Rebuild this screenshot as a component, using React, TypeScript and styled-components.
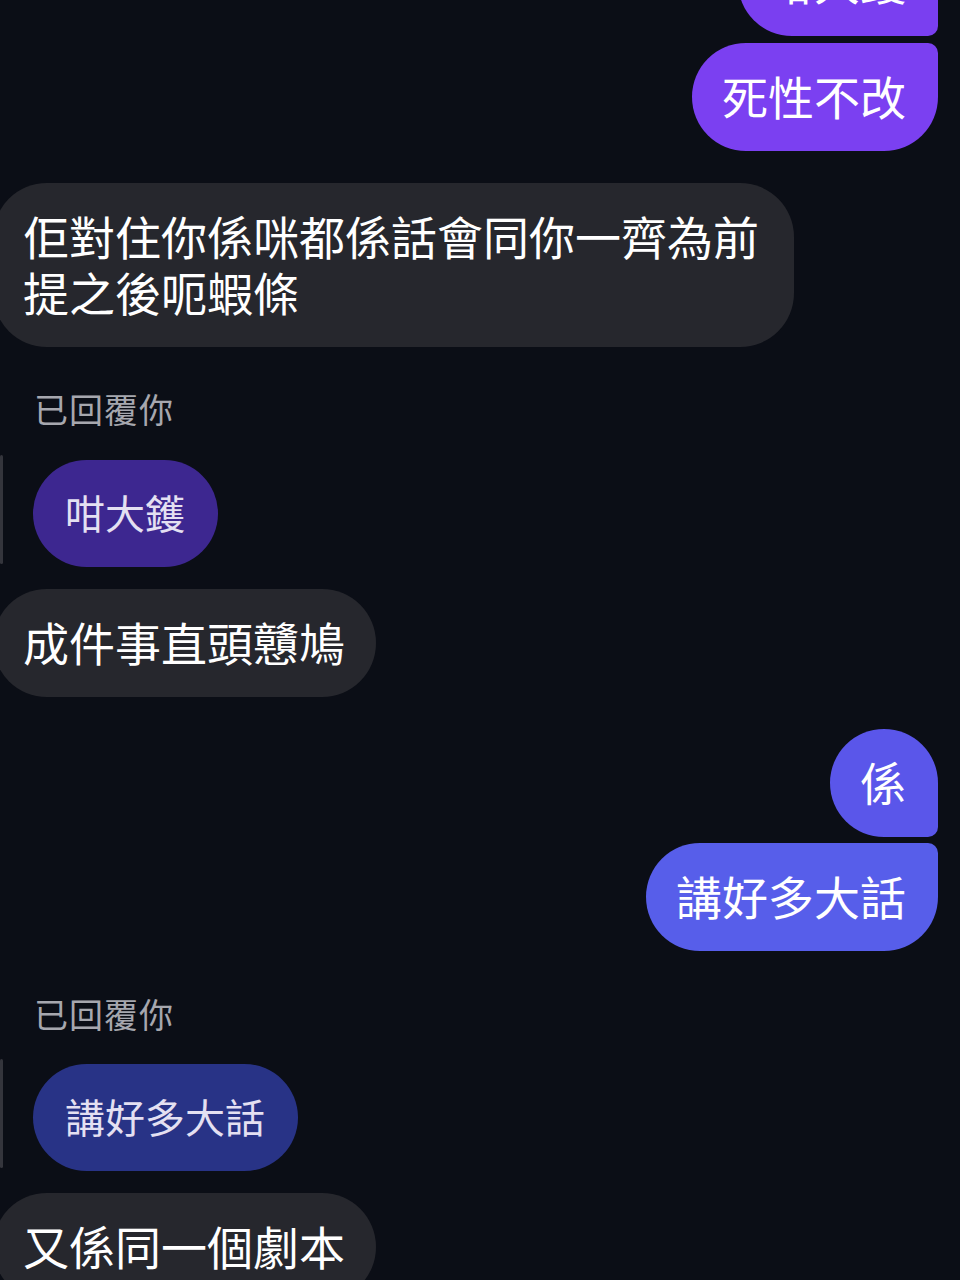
import React from "react";
import styled, { createGlobalStyle, css } from "styled-components";

const Global = createGlobalStyle`
  html, body {
    margin: 0;
    padding: 0;
    background: #0b0e16;
  }
  body {
    font-family: "Noto Sans CJK TC", "Noto Sans", sans-serif;
    overflow: hidden;
  }
`;

const Screen = styled.div`
  width: 960px;
  height: 1280px;
  overflow: hidden;
  background: #0b0e16;
`;

const Chat = styled.div`
  display: flex;
  flex-direction: column;
  padding: 0 22px 0 0;
`;

type Pos = "first" | "last" | "single";

const Row = styled.div<{ $side: "left" | "right"; $gap: number }>`
  display: flex;
  justify-content: ${(p) => (p.$side === "right" ? "flex-end" : "flex-start")};
  margin-top: ${(p) => p.$gap}px;
`;

const OutBubble = styled.div<{ $pos: Pos; $color: string }>`
  background: ${(p) => p.$color};
  color: #ffffff;
  font-size: 46px;
  line-height: 56px;
  padding: 24px 32px 28px 30px;
  white-space: nowrap;
  border-radius: 54px;
  ${(p) =>
    p.$pos === "first" &&
    css`
      border-bottom-right-radius: 10px;
    `}
  ${(p) =>
    p.$pos === "last" &&
    css`
      border-top-right-radius: 10px;
    `}
`;

const InBubble = styled.div`
  background: #26272d;
  color: #ffffff;
  font-size: 46px;
  line-height: 56px;
  padding: 24px 31px 28px 30px;
  margin-left: -7px;
  max-width: 740px;
  border-radius: 54px;
`;

const ReplyLabel = styled.div<{ $gap: number }>`
  margin-top: ${(p) => p.$gap}px;
  padding-left: 34px;
  color: #a6a7ae;
  font-size: 34px;
  line-height: 44px;
  letter-spacing: 1px;
`;

const ReplyRow = styled.div<{ $gap: number }>`
  display: flex;
  align-items: stretch;
  margin-top: ${(p) => p.$gap}px;
`;

const ReplyBar = styled.div`
  width: 3px;
  margin: -5px 30px 3px 0;
  background: #34353c;
  border-radius: 2px;
`;

const QuoteBubble = styled.div<{ $color: string }>`
  background: ${(p) => p.$color};
  color: #e4e0f2;
  font-size: 40px;
  line-height: 51px;
  padding: 27px 33px 29px 32px;
  border-radius: 54px;
  white-space: nowrap;
`;

const TopRow = styled(Row)`
  margin-top: -72px;
`;

export default function App() {
  return (
    <Screen>
      <Global />
      <Chat>
        <TopRow $side="right" $gap={0}>
          <OutBubble $pos="first" $color="#7a3ff0">咁大鑊</OutBubble>
        </TopRow>
        <Row $side="right" $gap={7}>
          <OutBubble $pos="last" $color="#7b40f1">死性不改</OutBubble>
        </Row>
        <Row $side="left" $gap={32}>
          <InBubble>佢對住你係咪都係話會同你一齊為前提之後呃蝦條</InBubble>
        </Row>
        <ReplyLabel $gap={40}>已回覆你</ReplyLabel>
        <ReplyRow $gap={29}>
          <ReplyBar />
          <QuoteBubble $color="#3d2790">咁大鑊</QuoteBubble>
        </ReplyRow>
        <Row $side="left" $gap={22}>
          <InBubble>成件事直頭戇鳩</InBubble>
        </Row>
        <Row $side="right" $gap={32}>
          <OutBubble $pos="first" $color="#5a56ea">係</OutBubble>
        </Row>
        <Row $side="right" $gap={6}>
          <OutBubble $pos="last" $color="#575eea">講好多大話</OutBubble>
        </Row>
        <ReplyLabel $gap={41}>已回覆你</ReplyLabel>
        <ReplyRow $gap={28}>
          <ReplyBar />
          <QuoteBubble $color="#283386">講好多大話</QuoteBubble>
        </ReplyRow>
        <Row $side="left" $gap={22}>
          <InBubble>又係同一個劇本</InBubble>
        </Row>
      </Chat>
    </Screen>
  );
}
